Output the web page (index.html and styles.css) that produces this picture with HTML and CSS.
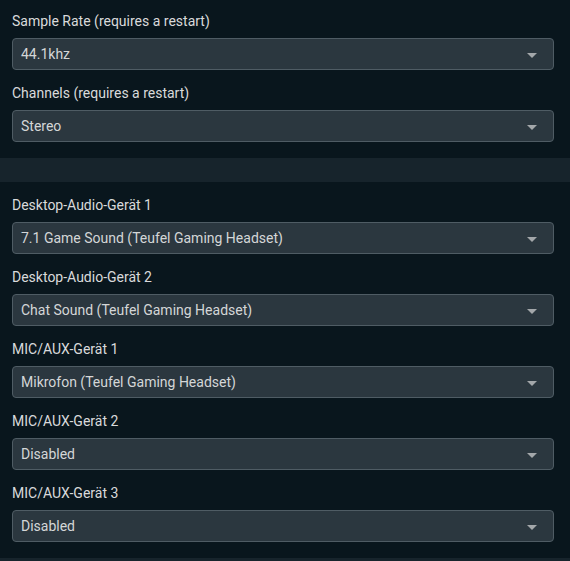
FILE: index.html
```html
<!DOCTYPE html>
<html>
<head>
<meta charset="utf-8">
<link rel="stylesheet" href="styles.css">
</head>
<body>
<div class="section first">
  <div class="field">
    <div class="label">Sample Rate (requires a restart)</div>
    <div class="select"><span class="value">44.1khz</span><span class="arrow"></span></div>
  </div>
  <div class="field">
    <div class="label">Channels (requires a restart)</div>
    <div class="select"><span class="value">Stereo</span><span class="arrow"></span></div>
  </div>
</div>
<div class="band"></div>
<div class="section">
  <div class="field">
    <div class="label">Desktop-Audio-Gerät 1</div>
    <div class="select"><span class="value">7.1 Game Sound (Teufel Gaming Headset)</span><span class="arrow"></span></div>
  </div>
  <div class="field">
    <div class="label">Desktop-Audio-Gerät 2</div>
    <div class="select"><span class="value">Chat Sound (Teufel Gaming Headset)</span><span class="arrow"></span></div>
  </div>
  <div class="field">
    <div class="label">MIC/AUX-Gerät 1</div>
    <div class="select"><span class="value">Mikrofon (Teufel Gaming Headset)</span><span class="arrow"></span></div>
  </div>
  <div class="field">
    <div class="label">MIC/AUX-Gerät 2</div>
    <div class="select"><span class="value">Disabled</span><span class="arrow"></span></div>
  </div>
  <div class="field">
    <div class="label">MIC/AUX-Gerät 3</div>
    <div class="select"><span class="value">Disabled</span><span class="arrow"></span></div>
  </div>
</div>
<div class="band"></div>
</body>
</html>
```
FILE: styles.css
```css
html, body {
  margin: 0;
  padding: 0;
  background: #09161d;
  font-family: Roboto, "Liberation Sans", sans-serif;
  font-size: 14px;
  color: #d8d9da;
}
body {
  width: 570px;
  height: 561px;
  overflow: hidden;
}
.section {
  display: flex;
  flex-direction: column;
  gap: 12px;
  padding: 12px 16px 16px 12px;
}
.section.first {
  padding-top: 10px;
}
.field {
  display: flex;
  flex-direction: column;
  gap: 7px;
}
.label {
  line-height: 20px;
  height: 20px;
  padding-top: 1px;
  color: #d9dadb;
}
.select {
  box-sizing: border-box;
  height: 32px;
  width: 542px;
  background: #2b373f;
  border: 1px solid #4f5c64;
  border-radius: 4px;
  display: flex;
  align-items: center;
  justify-content: space-between;
  padding: 0 16px 0 8px;
  color: #d4d6d7;
}
.value {
  line-height: 20px;
}
.arrow {
  width: 0;
  height: 0;
  border-left: 5px solid transparent;
  border-right: 5px solid transparent;
  border-top: 5px solid #a3a7aa;
  margin-top: 2px;
}
.band {
  height: 24px;
  background: #17242c;
}
```
